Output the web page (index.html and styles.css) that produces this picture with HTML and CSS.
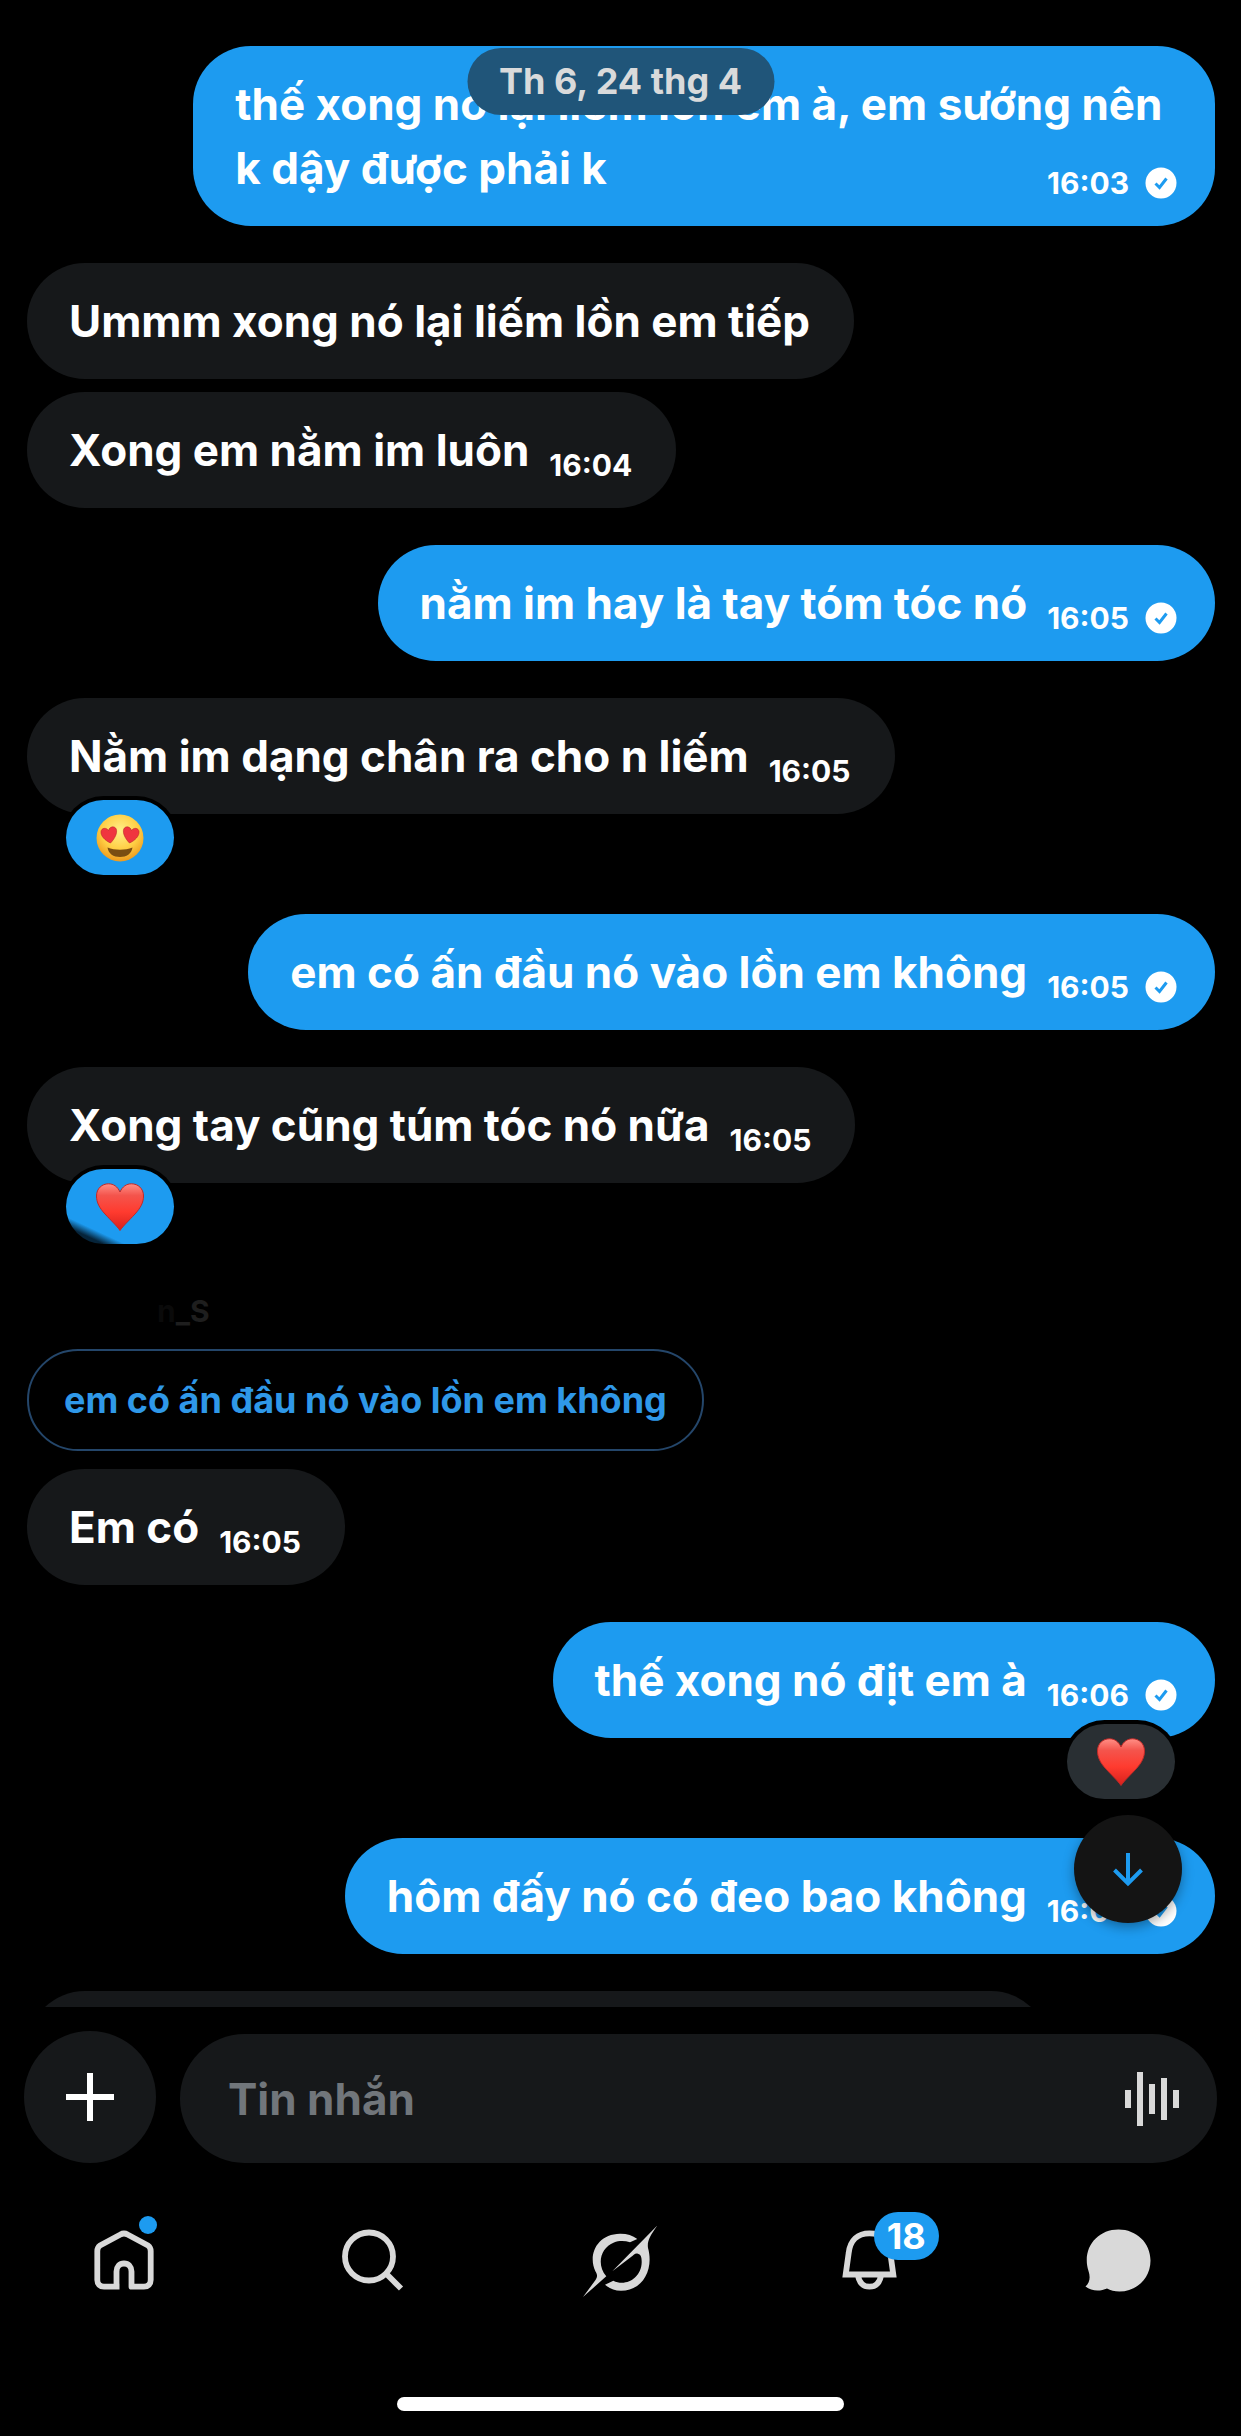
FILE: index.html
```
<!DOCTYPE html>
<html lang="vi">
<head>
<meta charset="utf-8">
<meta name="viewport" content="width=device-width, initial-scale=1">
<title>Tin nhắn</title>
<link rel="stylesheet" href="styles.css">
</head>
<body>
<svg class="defs" aria-hidden="true">
  <defs>
    <linearGradient id="heart-fill" x1="0" y1="0" x2="0" y2="1">
      <stop offset="0" stop-color="#ff8f86"/>
      <stop offset=".25" stop-color="#f4544c"/>
      <stop offset=".6" stop-color="#ff3b2f"/>
      <stop offset="1" stop-color="#d8201c"/>
    </linearGradient>
    <radialGradient id="face-fill" cx=".5" cy=".35" r=".65">
      <stop offset="0" stop-color="#fff08a"/>
      <stop offset=".6" stop-color="#ffcf45"/>
      <stop offset="1" stop-color="#ee9a1e"/>
    </radialGradient>
    <symbol id="heart" viewBox="0 0 48 48">
      <path fill="url(#heart-fill)" stroke="#c02a28" stroke-width="1" d="M24 47.500C21 43 15 37.500 9 31C3.500 25 .5 19.500 .5 13C.5 5.500 6 .8 12.500 .8C17.500 .8 21.500 3.500 24 9C26.500 3.500 30.500 .8 35.500 .8C42 .8 47.500 5.500 47.500 13C47.500 19.500 44.500 25 39 31C33 37.500 27 43 24 47.500Z"/>
    </symbol>
    <symbol id="sent" viewBox="0 0 32 32">
      <circle cx="16" cy="16" r="15.500" fill="#fff"/>
      <path d="M10.500 16.500L14.500 20.500L21.500 11.500" fill="none" stroke="#1d9bf0" stroke-width="3"/>
    </symbol>
  </defs>
</svg>
<div class="screen">
  <main class="thread">
    <time class="date">Th 6, 24 thg 4</time>
    <ol class="messages">
      <li class="msg msg--out">thế xong nó lại liếm lồn em à, em sướng nên k dậy được phải k<span class="meta">16:03<svg class="check"><use href="#sent"/></svg></span></li>
      <li class="msg">Ummm xong nó lại liếm lồn em tiếp</li>
      <li class="msg msg--follow">Xong em nằm im luôn<span class="meta">16:04</span></li>
      <li class="msg msg--out">nằm im hay là tay tóm tóc nó<span class="meta">16:05<svg class="check"><use href="#sent"/></svg></span></li>
      <li class="msg msg--reacted">Nằm im dạng chân ra cho n liếm<span class="meta">16:05</span>
        <button class="reaction" type="button" aria-label="Cảm xúc">
          <svg class="emoji" viewBox="0 0 48 48">
            <circle cx="24" cy="24" r="23.500" fill="url(#face-fill)"/>
            <g fill="#f0353f" stroke="#b8262a" stroke-width=".6">
              <path d="M14.500 29C9 26.500 4.500 22 5 17.500C5.500 14 10 13 12.500 16.500C13.500 12.500 18.500 11.500 20.200 15C21.800 19 18.500 25 14.500 29Z"/>
              <path d="M33.500 29C39 26.500 43.500 22 43 17.500C42.500 14 38 13 35.500 16.500C34.500 12.500 29.500 11.500 27.800 15C26.200 19 29.500 25 33.500 29Z"/>
            </g>
            <path d="M11.500 33.500C19 36.500 29 36.500 36.500 33.500C35.500 40 30.500 43 24 43C17.500 43 12.500 40 11.500 33.500Z" fill="#7a4d12"/>
          </svg>
        </button>
      </li>
      <li class="msg msg--out">em có ấn đầu nó vào lồn em không<span class="meta">16:05<svg class="check"><use href="#sent"/></svg></span></li>
      <li class="msg msg--reacted">Xong tay cũng túm tóc nó nữa<span class="meta">16:05</span>
        <button class="reaction reaction--smudged" type="button" aria-label="Cảm xúc"><svg class="emoji"><use href="#heart"/></svg></button>
      </li>
      <li class="reply">
        <p class="author">n<span class="author-end">_S</span></p>
        <blockquote class="quote">em có ấn đầu nó vào lồn em không</blockquote>
        <p class="msg msg--answer">Em có<span class="meta">16:05</span></p>
      </li>
      <li class="msg msg--out msg--reacted">thế xong nó địt em à<span class="meta">16:06<svg class="check"><use href="#sent"/></svg></span>
        <button class="reaction" type="button" aria-label="Cảm xúc"><svg class="emoji"><use href="#heart"/></svg></button>
      </li>
      <li class="msg msg--out">hôm đấy nó có đeo bao không<span class="meta">16:06<svg class="check"><use href="#sent"/></svg></span></li>
      <li class="msg msg--next"></li>
    </ol>
    <button class="jump" type="button" aria-label="Xuống cuối">
      <svg width="32" height="36" viewBox="0 0 32 36" fill="none" stroke="#1d9bf0" stroke-width="4"><path d="M16 2V32M2.500 19L16 32.500L29.500 19"/></svg>
    </button>
  </main>
  <form class="composer">
    <button class="add" type="button" aria-label="Thêm">
      <svg width="48" height="48" viewBox="0 0 48 48" stroke="#fff" stroke-width="6"><path d="M24 0V48M0 24H48"/></svg>
    </button>
    <div class="field">
      <input class="input" type="text" placeholder="Tin nhắn" aria-label="Tin nhắn">
      <button class="voice" type="button" aria-label="Tin nhắn thoại">
        <svg width="54" height="54" viewBox="0 0 54 54" stroke="#d9d9d9" stroke-width="6"><path d="M3 18V36M15 0V54M27 12V42M39 6V48M51 18V36"/></svg>
      </button>
    </div>
  </form>
  <nav class="tabs">
    <a class="tab" href="#home" aria-label="Trang chủ">
      <svg class="icon" viewBox="0 0 72 72" fill="none" stroke="#d9d9d9" stroke-width="5.800" stroke-linejoin="round">
        <path d="M28.500 65.500V47.500C28.500 43 31.500 39.500 36 39.500S43.500 43 43.500 47.500V62.700H56C60 62.700 62.700 60 62.700 56V27C62.700 24.500 62 23 60 21.500L39.500 10.500C37 9 35 9 32.500 10.500L12 21.500C10 23 9.300 24.500 9.300 27V56C9.300 60 12 62.700 16 62.700H31.500"/>
      </svg>
      <span class="dot"></span>
    </a>
    <a class="tab" href="#search" aria-label="Tìm kiếm">
      <svg class="icon" viewBox="0 0 72 72" fill="none" stroke="#d9d9d9" stroke-width="5.800"><circle cx="33" cy="32.500" r="24"/><path d="M50 49.500L65 64.500"/></svg>
    </a>
    <a class="tab" href="#grok" aria-label="Grok">
      <svg class="icon" viewBox="0 0 72 72" fill="#d9d9d9">
        <path d="M-2 73L10.500 56C13 52 12 50 10.500 47.500C2.500 31 12 10 35 9.700C42 9.600 47.500 11.500 52.300 15L45 18.300C40 16.700 34 16.500 29 18.500C15 24 11.500 41 21.300 52.300Z"/>
        <path d="M27.300 47.300L72.300 1.500C65 12 62 17 63 24C69 45 58 66.700 36 66.700C29.500 66.700 24.500 64.500 20 60.700L28.300 56.700C41 63 56.500 54 56.700 38C56.700 33 56 30.500 52.300 29.500C50 29 48 31.500 46 33Z"/>
      </svg>
    </a>
    <a class="tab" href="#notifications" aria-label="Thông báo">
      <svg class="icon" viewBox="0 0 72 72" fill="none" stroke="#d9d9d9" stroke-width="5.800"><path d="M12.700 50.500L15.700 29C17 16 25 9.300 36.500 9.300S56 16 57.300 29L60.300 50.500ZM25 52C26.500 59 30.500 62.700 36.500 62.700S46.500 59 48 52"/></svg>
      <span class="badge">18</span>
    </a>
    <a class="tab" href="#messages" aria-label="Tin nhắn">
      <svg class="icon" viewBox="0 0 72 72" fill="#d9d9d9"><path d="M37.500 5.500C55.500 5.500 69.500 19 69.500 36.500S56 67.500 38.500 67.500C33.500 67.500 29.500 66.500 26 64.500C19.500 67.500 10.500 67.500 4.500 62.500C9 58 9.500 53 7.500 47C.5 25 15.500 5.500 37.500 5.500Z"/></svg>
    </a>
  </nav>
  <div class="home-bar"></div>
</div>
</body>
</html>
```
FILE: styles.css
```
* { box-sizing: border-box; }

body {
  margin: 0;
  background: #000;
  color: #fff;
  font-family: Inter, "Noto Sans", sans-serif;
  font-size: 44px;
  font-weight: 700;
  line-height: 64px;
}

button {
  display: grid;
  place-items: center;
  padding: 0;
  border: 0;
  background: none;
}

svg { display: block; }

.defs {
  position: absolute;
  width: 0;
  height: 0;
}

.screen {
  display: flex;
  flex-direction: column;
  height: 100vh;
}

/* Conversation */

.thread {
  position: relative;
  flex: 1;
  min-height: 0;
  overflow: hidden;
  padding: 9px 26px 0 27px;
}

.date {
  position: absolute;
  z-index: 1;
  top: 48px;
  left: 50%;
  padding: 0 32px;
  border-radius: 34px;
  background: #205579;
  color: #d9dadb;
  font-size: 36px;
  line-height: 67px;
  white-space: nowrap;
  transform: translateX(-50%);
}

.messages {
  display: flex;
  flex-direction: column;
  align-items: flex-start;
  margin: 0;
  padding: 0;
  list-style: none;
}

.msg {
  position: relative;
  flex: none;
  max-width: 86%;
  min-height: 116px;
  margin: 37px 0 0;
  padding: 26px 44px 26px 42px;
  border-radius: 58px;
  background: #16181a;
}

.msg--out {
  align-self: flex-end;
  padding-right: 38px;
  background: #1d9bf0;
}

.msg--follow { margin-top: 13px; }
.msg--reacted { margin-bottom: 63px; }
.msg--answer { width: fit-content; margin-top: 18px; }
.msg--next { width: 86%; }

/* Time and delivery mark, on the last line of the text */
.meta {
  display: flex;
  float: right;
  align-items: center;
  gap: 16px;
  padding: 30px 0 0 20px;
  font-size: 30px;
  line-height: 34px;
}

.check {
  width: 32px;
  height: 32px;
}

.reaction {
  position: absolute;
  top: 102px;
  left: 39px;
  width: 108px;
  height: 75px;
  border-radius: 38px;
  background: #1d9bf0;
  box-shadow: 0 0 0 4px #000;
}

.reaction--smudged {
  background: linear-gradient(25deg, #06243a 14%, #1d9bf0 22%);
}

.msg--out .reaction {
  right: 40px;
  left: auto;
  background: #292f33;
}

.emoji {
  width: 48px;
  height: 48px;
}

.reply { margin-top: 37px; }

.author {
  margin: 0 0 10px;
  padding-left: 130px;
  color: #0a0a0a;
  font-size: 30px;
  line-height: 56px;
}

.author-end { color: #1e1e1e; }

.quote {
  width: fit-content;
  margin: 0;
  padding: 17px 35px;
  border: 2px solid #24466a;
  border-radius: 51px;
  color: #2f98e8;
  font-size: 36px;
}

.jump {
  position: absolute;
  right: 59px;
  bottom: 84px;
  width: 108px;
  height: 108px;
  border-radius: 50%;
  background: #141414;
  box-shadow: 0 4px 12px rgba(0, 0, 0, .35);
}

/* Composer */

.composer {
  display: flex;
  align-items: flex-end;
  gap: 24px;
  padding: 24px;
}

.add {
  flex: none;
  width: 132px;
  height: 132px;
  border-radius: 50%;
  background: #16181a;
}

.field {
  display: flex;
  flex: 1;
  align-items: center;
  height: 129px;
  padding: 0 38px 0 48px;
  border-radius: 65px;
  background: #16181a;
}

.input {
  flex: 1;
  min-width: 0;
  padding: 0;
  border: 0;
  outline: 0;
  background: none;
  color: #fff;
  font: inherit;
}

.input::placeholder {
  color: #71767b;
  opacity: 1;
}

/* Tab bar */

.tabs {
  display: flex;
  padding-top: 37px;
}

.tab {
  position: relative;
  display: grid;
  flex: 1;
  place-items: center;
}

.icon {
  width: 72px;
  height: 72px;
  overflow: visible;
}

.dot {
  position: absolute;
  top: -8px;
  left: 50%;
  width: 18px;
  height: 18px;
  margin-left: 15px;
  border-radius: 50%;
  background: #1d9bf0;
}

.badge {
  position: absolute;
  top: -12px;
  left: 50%;
  margin-left: 5px;
  padding: 0 13px;
  border-radius: 24px;
  background: #1d9bf0;
  color: #fff;
  font-size: 36px;
  line-height: 48px;
}

.home-bar {
  width: 36%;
  height: 14px;
  margin: 101px auto 25px;
  border-radius: 7px;
  background: #fff;
}
```
